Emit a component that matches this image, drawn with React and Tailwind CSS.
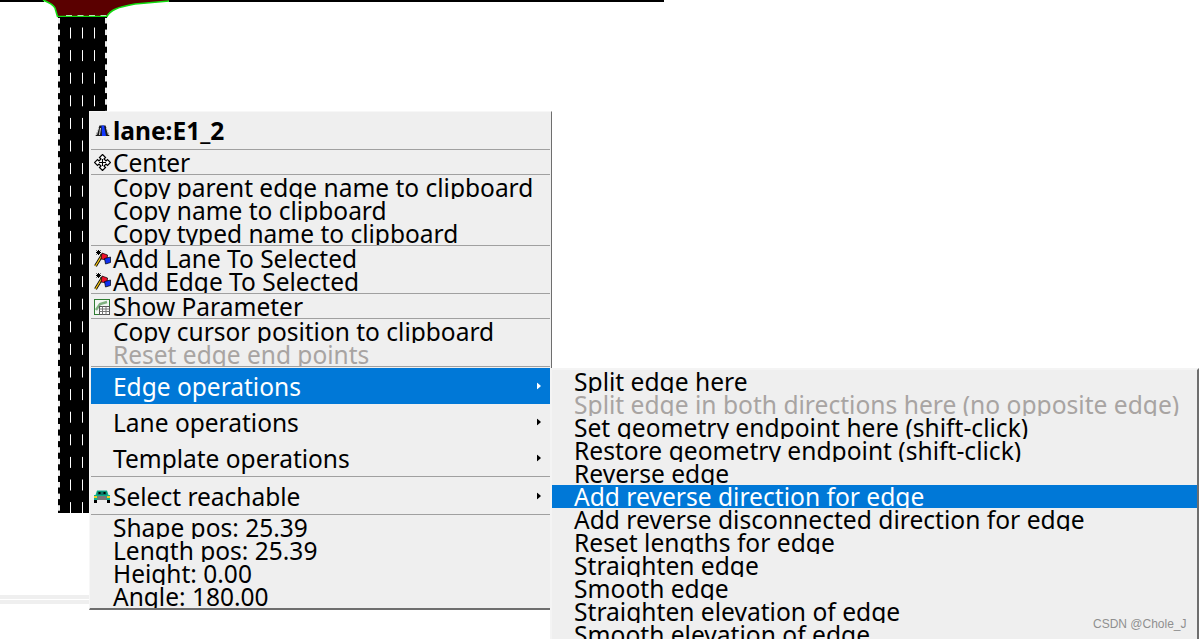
const FONT = "font-['Noto_Sans','Open_Sans',sans-serif]";

function Road() {
  const dashes = [];
  for (let i = 0; i < 22; i++) {
    const y = 27.5 + i * 22.6;
    [70, 82, 94].forEach((x) => dashes.push(<rect key={x + "-" + i} x={x} y={y} width="1" height="11" fill="#fff" />));
  }
  const edge = [];
  for (let i = 0; i < 43; i++) {
    const y = 18 + i * 11.6;
    edge.push(<rect key={"l" + i} x="58" y={y} width="2" height="5.5" fill="#eeeeee" />);
    edge.push(<rect key={"r" + i} x="105" y={y} width="2" height="5.5" fill="#eeeeee" />);
  }
  const top = [];
  for (let i = 0; i < 4; i++) top.push(<rect key={"t" + i} x={66 + i * 11.5} y="15" width="6" height="2" fill="#eeeeee" />);
  return (
    <svg className="absolute left-0 top-0" width="664" height="639" viewBox="0 0 664 639">
      <rect x="0" y="0" width="664" height="2" fill="#000" />
      <rect x="44" y="0" width="125" height="2" fill="#fff" />
      <path d="M43 0 C48 2 53 4 55 8 L57.5 16 L107 16 C110 10 118 7 135 4 L169 1 L169 0 Z" fill="#5a0000" />
      {top}
      <path d="M43 0 C48 2 53 4 55 8 L57.5 16.5 L107 16.5 C110 10 118 7 135 4 L169 1" fill="none" stroke="#10dc10" strokeWidth="1.6" />
      <rect x="58" y="17" width="49" height="496" fill="#000" />
      {edge}
      {dashes}
      <rect x="0" y="595" width="90" height="4" fill="#efefef" />
      <rect x="0" y="600" width="90" height="4" fill="#efefef" />
    </svg>
  );
}

function LaneIcon() {
  return (
    <svg width="15" height="12" viewBox="0 0 15 12" className="shrink-0">
      <path d="M4.5 .5 L10.5 .5 L14.5 11 L.5 11 Z" fill="#1a1a1a" />
      <path d="M6.5 .5 L9 .5 L11 11 L7 11 Z" fill="#1238ff" />
      <path d="M3.5 3 L1.5 10 M5.5 3 L4.5 10 M11.5 3 L13.5 10" stroke="#e8e8e8" strokeWidth=".9" />
    </svg>
  );
}
function CenterIcon() {
  return (
    <svg width="17" height="17" viewBox="0 0 17 17" className="shrink-0">
      <path d="M8.5 .5 L11.5 3.5 L10 5 L12 7 L13.5 5.5 L16.5 8.5 L13.5 11.5 L12 10 L10 12 L11.5 13.5 L8.5 16.5 L5.5 13.5 L7 12 L5 10 L3.5 11.5 L.5 8.5 L3.5 5.5 L5 7 L7 5 L5.5 3.5 Z" fill="#fff" stroke="#000" strokeWidth="1.2" />
      <path d="M8.5 5 V12 M5 8.5 H12" stroke="#000" strokeWidth="1.1" />
    </svg>
  );
}
function FlagIcon() {
  return (
    <svg width="17" height="17" viewBox="0 0 17 17" className="shrink-0">
      <path d="M1.5 16 L8.5 4.5" stroke="#000" strokeWidth="3" />
      <path d="M1.5 16 L8.5 4.5" stroke="#f5c518" strokeWidth="1.4" />
      <path d="M2 2.5 H7 M4.5 0 V5 M2.5 .5 L6.5 4.5 M6.5 .5 L2.5 4.5" stroke="#000" strokeWidth="1" />
      <path d="M8 3 L13.5 5 L13 10 L7 9 Z" fill="#f0102a" stroke="#000" strokeWidth=".7" />
      <path d="M10.5 8.5 L16.5 7 L16.5 12.5 L11.5 14 Z" fill="#1030f0" stroke="#000" strokeWidth=".7" />
    </svg>
  );
}
function ParamIcon() {
  return (
    <svg width="16" height="16" viewBox="0 0 16 16" className="shrink-0">
      <rect x=".5" y=".5" width="15" height="15" fill="#f4f8f4" stroke="#2e7d32" />
      <path d="M2 11 L6 5 L13 3" stroke="#7fb07f" strokeWidth="2.4" fill="none" />
      <rect x="5.5" y="7.5" width="10" height="8" fill="#fff" stroke="#555" />
      <path d="M5.5 10 H15.5 M5.5 12.5 H15.5 M8.5 7.5 V15.5 M12 7.5 V15.5" stroke="#777" strokeWidth="1" />
    </svg>
  );
}
function CarIcon() {
  return (
    <svg width="16" height="13" viewBox="0 0 16 13" className="shrink-0">
      <path d="M3 0.5 H13 L14.5 5 H16 V10 H0 V5 H1.5 Z" fill="#0fb08a" />
      <rect x="3.5" y="1.5" width="9" height="3.5" fill="#0a7a68" />
      <rect x="4.5" y="2" width="2" height="2" fill="#000" />
      <rect x="9.5" y="2" width="2" height="2" fill="#000" />
      <rect x="0" y="6" width="3" height="2" fill="#f0d020" />
      <rect x="13" y="6" width="3" height="2" fill="#f0d020" />
      <rect x="3.5" y="6" width="9" height="4" fill="#777" />
      <rect x="0" y="10" width="3" height="3" fill="#000" />
      <rect x="13" y="10" width="3" height="3" fill="#000" />
    </svg>
  );
}
function Arrow({ active }) {
  return (
    <svg width="5" height="7" viewBox="0 0 5 7" className="absolute right-[8px] top-1/2 -translate-y-1/2">
      <path d="M0 0 L4 3.5 L0 7 Z" fill={active ? "#fff" : "#000"} />
    </svg>
  );
}

function Row({ icon, children, tall, disabled, active, bold, arrow, header, sub }) {
  const h = header || tall ? "h-9" : "h-[23px]";
  const color = active ? "bg-[#0078d7] text-white" : disabled ? "text-[#a8a4a2]" : "text-black";
  const leading = header ? "leading-9" : tall ? "leading-[38px]" : "leading-[23px]";
  return (
    <div className={`relative flex overflow-hidden whitespace-nowrap ${h} ${color}`}>
      <div className="flex w-[22px] shrink-0 items-center justify-center">{icon}</div>
      <span className={`${sub ? "text-[24.6px]" : "text-[24.5px]"} ${leading} ${bold ? "font-bold" : ""}`}>{children}</span>
      {arrow && <Arrow active={active} />}
    </div>
  );
}
function Sep() {
  return <div className="mb-px h-px bg-[#a0a0a0]" />;
}

export default function App() {
  return (
    <div className={`relative h-[639px] w-[1200px] overflow-hidden bg-white ${FONT}`}>
      <Road />

      <div className="absolute left-[89px] top-[111px] h-[499px] w-[463px] border border-b-2 border-[#f7f7f7] border-r-[#6e6e6e] border-b-[#6e6e6e] bg-[#efefef] pt-px pl-px pr-px">
        <Row header bold icon={<LaneIcon />}>lane:E1_2</Row>
        <Sep />
        <Row icon={<CenterIcon />}>Center</Row>
        <Sep />
        <Row>Copy parent edge name to clipboard</Row>
        <Row>Copy name to clipboard</Row>
        <Row>Copy typed name to clipboard</Row>
        <Sep />
        <Row icon={<FlagIcon />}>Add Lane To Selected</Row>
        <Row icon={<FlagIcon />}>Add Edge To Selected</Row>
        <Sep />
        <Row icon={<ParamIcon />}>Show Parameter</Row>
        <Sep />
        <Row>Copy cursor position to clipboard</Row>
        <Row disabled>Reset edge end points</Row>
        <Sep />
        <Row tall active arrow>Edge operations</Row>
        <Row tall arrow>Lane operations</Row>
        <Row tall arrow>Template operations</Row>
        <Sep />
        <Row tall arrow icon={<CarIcon />}>Select reachable</Row>
        <Sep />
        <Row>Shape pos: 25.39</Row>
        <Row>Length pos: 25.39</Row>
        <Row>Height: 0.00</Row>
        <Row>Angle: 180.00</Row>
      </div>

      <div className="absolute left-[550px] top-[368px] h-[280px] w-[649px] border-2 border-[#f4f4f4] border-r-[#6e6e6e] bg-[#efefef]">
        <Row sub>Split edge here</Row>
        <Row sub disabled>Split edge in both directions here (no opposite edge)</Row>
        <Row sub>Set geometry endpoint here (shift-click)</Row>
        <Row sub>Restore geometry endpoint (shift-click)</Row>
        <Row sub>Reverse edge</Row>
        <Row sub active>Add reverse direction for edge</Row>
        <Row sub>Add reverse disconnected direction for edge</Row>
        <Row sub>Reset lengths for edge</Row>
        <Row sub>Straighten edge</Row>
        <Row sub>Smooth edge</Row>
        <Row sub>Straighten elevation of edge</Row>
        <Row sub>Smooth elevation of edge</Row>
      </div>

      <div className="absolute left-[1093px] top-[617px] font-['Liberation_Sans',sans-serif] text-[12px] leading-[14px] text-[#8f8f8f]">CSDN @Chole_J</div>
    </div>
  );
}
